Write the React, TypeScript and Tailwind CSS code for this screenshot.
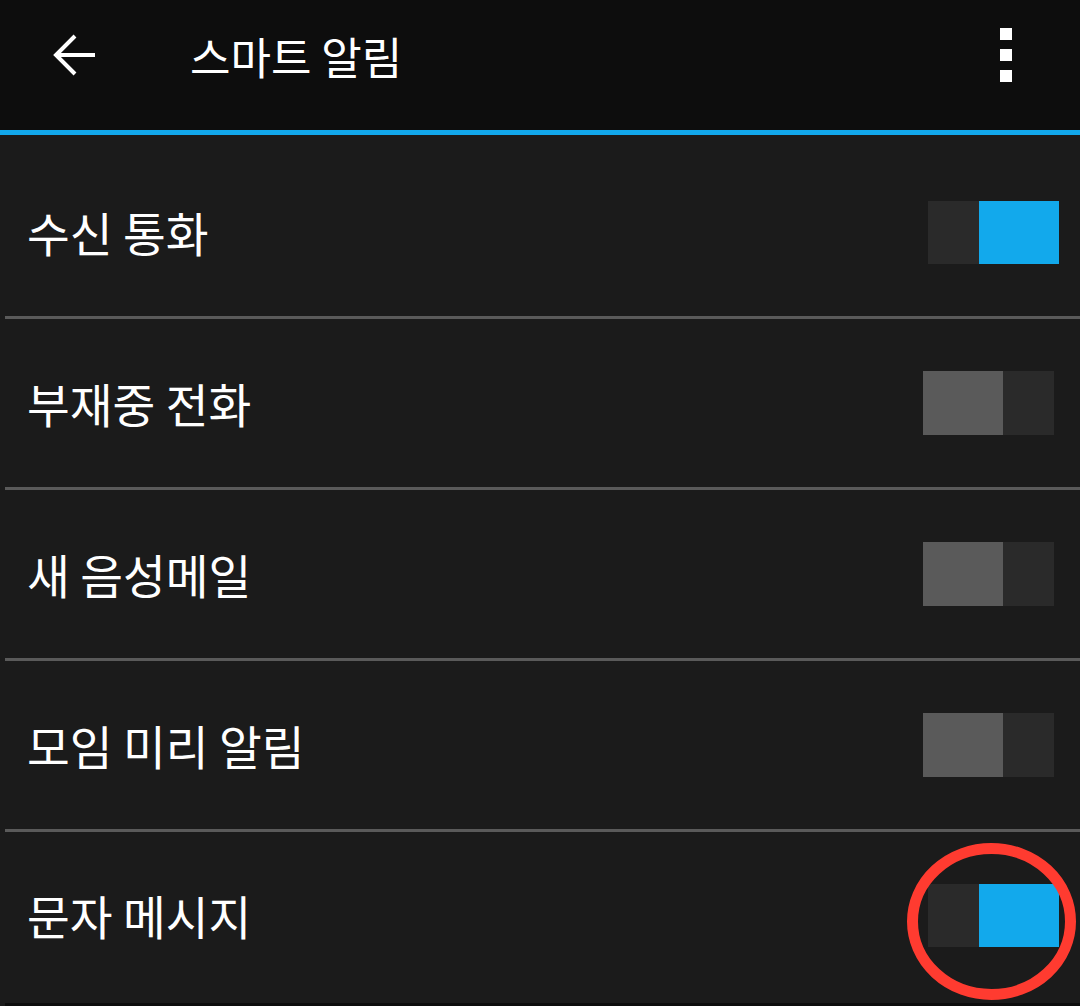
import React from "react";

const items = [
  { label: "수신 통화", on: true },
  { label: "부재중 전화", on: false },
  { label: "새 음성메일", on: false },
  { label: "모임 미리 알림", on: false },
  { label: "문자 메시지", on: true },
];

function Toggle({ on }: { on: boolean }) {
  if (on) {
    return (
      <div className="flex h-[63px] w-[131px] mr-[21px]">
        <div className="w-[51px] bg-[#2a2a2a]" />
        <div className="flex-1 bg-[#12a9ec]" />
      </div>
    );
  }
  return (
    <div className="flex h-[64px] w-[131px] mr-[26px]">
      <div className="w-[80px] bg-[#5a5a5a]" />
      <div className="flex-1 bg-[#2a2a2a]" />
    </div>
  );
}

export default function App() {
  return (
    <div
      className="relative w-[1080px] h-[1006px] overflow-hidden bg-[#1b1b1b] text-white"
      style={{ fontFamily: '"Noto Sans CJK KR", "Noto Sans", sans-serif' }}
    >
      {/* header */}
      <div className="flex items-center h-[130px] pb-[16px] bg-[#0d0d0d]">
        <svg width="46" height="46" viewBox="0 0 46 46" className="ml-[51px] mb-[4px]">
          <path d="M44 23H5 M24 4 L5 23 L24 42" fill="none" stroke="white" strokeWidth="4" />
        </svg>
        <div className="ml-[93px] text-[44px] leading-none mb-[2px]">스마트 알림</div>
        <div className="ml-auto mr-[68px] flex flex-col gap-[9px] mb-[4px]">
          <div className="w-[12px] h-[12px] bg-white" />
          <div className="w-[12px] h-[12px] bg-white" />
          <div className="w-[12px] h-[12px] bg-white" />
        </div>
      </div>
      <div className="h-[5px] bg-[#12a8ec]" />

      {/* list */}
      <div className="pt-[13px]">
        {items.map((it, i) => (
          <div key={i}>
            <div className={`flex items-center justify-between ${i === 4 ? "h-[171px] pb-[4px]" : "h-[168px]"}`}>
              <div className="pl-[27px] text-[46.5px] leading-none">{it.label}</div>
              <Toggle on={it.on} />
            </div>
            {i < 4 && <div className="ml-[5px] h-[3px] bg-[#5a5a5a]" />}
          </div>
        ))}
        <div className="ml-[5px] h-[6px] bg-[#0d0d0d]" />
      </div>

      {/* red annotation circle */}
      <svg className="absolute left-[907px] top-[843px]" width="169" height="157" viewBox="0 0 169 157">
        <ellipse cx="84.5" cy="78.5" rx="79" ry="73" fill="none" stroke="#ff3b30" strokeWidth="11" />
      </svg>
    </div>
  );
}
